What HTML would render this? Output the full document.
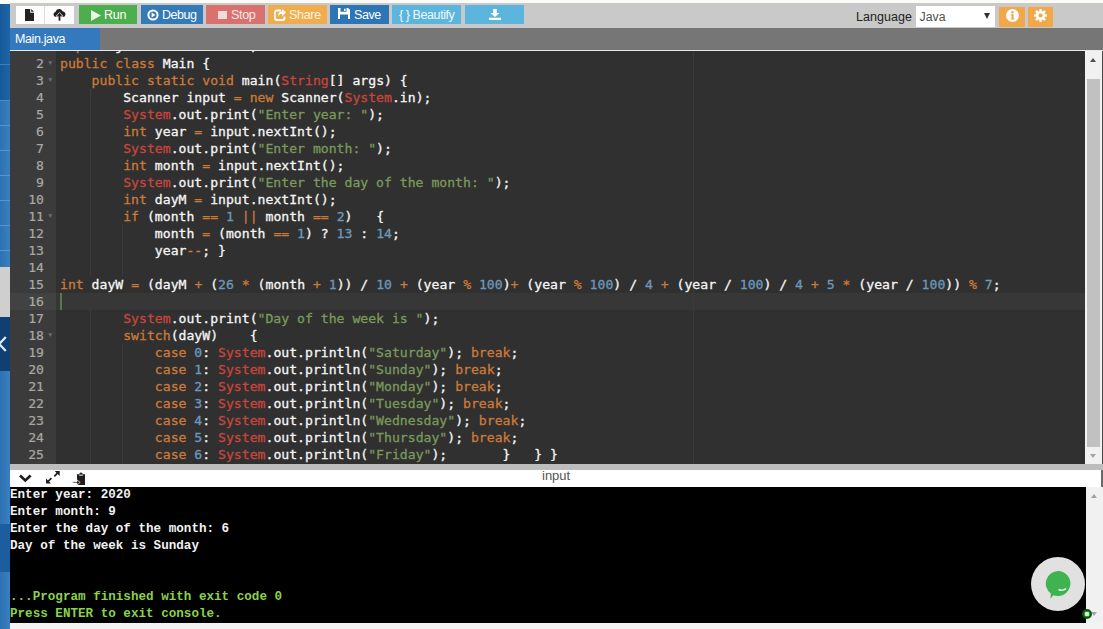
<!DOCTYPE html>
<html>
<head>
<meta charset="utf-8">
<title>Online Java Compiler</title>
<style>
*{box-sizing:border-box;margin:0;padding:0}
html,body{width:1103px;height:629px;overflow:hidden;background:#f4f4f4;font-family:"Liberation Sans",sans-serif}
.abs{position:absolute}
#top{left:0;top:0;width:1103px;height:4px;background:#fbfbf8}
#side{left:0;top:3px;width:10px;height:626px;background:linear-gradient(to right,#2c71b2,#3a7fc0);overflow:hidden}
#side div{position:absolute;left:0;width:10px}
#toolbar{left:10px;top:3px;width:1093px;height:25px;background:#c9c9c9}
.btn{position:absolute;top:2px;height:19px;color:#fff;font-size:12.5px;line-height:19px;white-space:nowrap;letter-spacing:-0.3px}
.btn svg{position:absolute}
.btn span{position:absolute;top:1px}
#tabbar{left:10px;top:28px;width:1093px;height:22px;background:#767676}
#tab{left:0;top:0;width:90px;height:22px;background:#3478bd;color:#fff;font-size:12.5px;line-height:23px;padding-left:5px;letter-spacing:-0.38px}
#edline{left:10px;top:50px;width:1093px;height:1px;background:#e8e8e8}
#editor{left:10px;top:51px;width:1075px;height:413px;background:#303030;overflow:hidden}
#gutter{left:0;top:0;width:46px;height:413px;background:#3b3b3b}
#active{left:0;top:242.400px;width:1075px;height:17px;background:#373737}
#gactive{left:0;top:242.400px;width:46px;height:17px;background:#424242}
.ln{position:absolute;left:0;width:34px;text-align:right;color:#a8a8a4;height:17px;-webkit-text-stroke:0.200px}
.fold{position:absolute;left:37px;width:7px;height:17px;color:#6e6e6e;font-size:6.500px;line-height:16px}
.mono{font-family:"DejaVu Sans Mono","Liberation Mono",monospace;font-size:13.14px;line-height:17px;white-space:pre}
.cl{position:absolute;left:50px;height:17px;color:#f6f6f6;-webkit-text-stroke:0.3px}
.k{color:#cc7a38}.s{color:#7a9a5a}.c{color:#c9453c}.n{color:#6c98bd}.o{color:#cc7a38}
.guide{position:absolute;width:1px;background:#3c3c3c}
#pm{left:683px;top:0;width:1px;height:413px;background:#3b3b3b}
#vsb{left:1085px;top:51px;width:17px;height:413px;background:#f1f1f1}
#vsb .thumb{position:absolute;left:2px;top:28px;width:13px;height:368px;background:#c1c1c1}
#rline{left:1101.500px;top:51px;width:1.500px;height:413px;background:#4a4a4a}
#split{left:10px;top:464px;width:1093px;height:6px;background:#bdbdbd}
#chead{left:10px;top:470px;width:1093px;height:17px;background:#fff}
#chead .lbl{position:absolute;left:532px;top:-1px;font-size:13px;line-height:14px;color:#555}
#console{left:10px;top:487px;width:1076px;height:136px;background:#000;overflow:hidden}
.con{font-family:"Liberation Mono",monospace;font-weight:bold;font-size:12.6px;line-height:17px;white-space:pre;position:absolute;left:0;color:#f2f2f2}
.g{color:#8ad24a}
#csb{left:1086px;top:487px;width:17px;height:136px;background:#f1f1f1}
#bottom{left:10px;top:623px;width:1093px;height:6px;background:#f3f3f3}
.tri{position:absolute;width:0;height:0;border-left:3.500px solid transparent;border-right:3.500px solid transparent}
</style>
</head>
<body>
<div class="abs" id="top"></div>

<div class="abs" id="side">
  <div style="top:0;height:97px;background:linear-gradient(to right,#15599a,#1e65a7)"></div>
  <div style="top:60.500px;height:1px;background:#3f7cba"></div>
  <div style="top:96.500px;height:1px;background:#4f8ac6"></div>
  <div style="top:121.5px;height:1px;background:#5b92c9"></div>
  <div style="top:146.5px;height:1px;background:#5b92c9"></div>
  <div style="top:171.5px;height:1px;background:#5b92c9"></div>
  <div style="top:196.5px;height:1px;background:#5b92c9"></div>
  <div style="top:221.5px;height:1px;background:#5b92c9"></div>
  <div style="top:246.5px;height:1px;background:#5b92c9"></div>
  <div style="top:264px;height:50px;background:#cfcfcf"></div>
  <div style="top:314px;height:54px;background:#0f3f73"></div>
  <svg style="position:absolute;left:0;top:330px" width="10" height="22" viewBox="0 0 10 22"><path d="M5.800 4 L-0.800 11 L5.800 18" fill="none" stroke="#dbeaf8" stroke-width="2.300"/></svg>
  <div style="top:520.500px;height:48px;background:#1c5d9f"></div>
</div>

<div class="abs" style="left:0;top:0;width:10px;height:4px;background:#fbfbf8"></div>

<div class="abs" id="toolbar">
  <div class="btn" style="left:6px;width:28px;background:#fdfdfd;top:3px;height:18px"><svg style="left:8.800px;top:2.500px" width="9" height="12" viewBox="0 0 9 12"><path d="M0 0 H5.200 V3.800 H9 V12 H0 Z M6.200 0 L9 2.800 H6.200 Z" fill="#222"/></svg></div>
  <div class="btn" style="left:34px;width:30px;background:#fdfdfd;border-left:1px solid #ddd;top:3px;height:18px"><svg style="left:8px;top:3px" width="13" height="12" viewBox="0 0 13 12"><path d="M2.800 8 A2.700 2.700 0 0 1 2.600 2.700 A3.700 3.700 0 0 1 9.600 2.300 A2.900 2.900 0 0 1 10.300 8 Z" fill="#222"/><path d="M6.500 3.400 L10 7.300 H7.800 V12 H5.200 V7.300 H3 Z" fill="#222" stroke="#fdfdfd" stroke-width="0.700"/></svg></div>
  <div class="btn" style="left:69px;width:58px;background:#4cae4c"><svg style="left:12px;top:4.500px" width="10" height="11" viewBox="0 0 10 11"><path d="M0 0 L10 5.500 L0 11 Z" fill="#e9f8e4"/></svg><span style="left:25px">Run</span></div>
  <div class="btn" style="left:131px;width:62px;background:#337ab7"><svg style="left:6px;top:4px" width="12" height="12" viewBox="0 0 12 12"><circle cx="6" cy="6" r="4.600" fill="none" stroke="#fff" stroke-width="2"/><path d="M4.6 3.6 L8.4 6 L4.6 8.4 Z" fill="#fff"/></svg><span style="left:21px;letter-spacing:-0.450px">Debug</span></div>
  <div class="btn" style="left:196px;width:59px;background:#d9726f"><svg style="left:11.500px;top:6px" width="9" height="8" viewBox="0 0 9 8"><rect width="9" height="8" fill="#f3dada"/></svg><span style="left:25px;color:#fbe9e9">Stop</span></div>
  <div class="btn" style="left:258px;width:59px;background:#f0ad4e"><svg style="left:6px;top:4px" width="12" height="12" viewBox="0 0 12 12"><path d="M7 1.5 H3 A2 2 0 0 0 1 3.500 V9 A2 2 0 0 0 3 11 H8.500 A2 2 0 0 0 10.500 9 V7.500" fill="none" stroke="#fff" stroke-width="1.8"/><path d="M12 3.600 L8.200 0 V2.200 C5.500 2.200 4 4 4 7.500 C5 5.500 6.200 5 8.200 5 V7.200 Z" fill="#fff"/></svg><span style="left:21px;color:#fdf3e2">Share</span></div>
  <div class="btn" style="left:320px;width:59px;background:#2e75b6"><svg style="left:8px;top:3px" width="12" height="11" viewBox="0 0 12 12" preserveAspectRatio="none"><path d="M0 0 H10 L12 2 V12 H0 Z M2.500 0 V4 H8.500 V0 Z M6 0.800 H7.600 V3.200 H6 Z M2 7 V12 H10 V7 Z" fill="#fff" fill-rule="evenodd"/></svg><span style="left:24px;letter-spacing:-0.450px">Save</span></div>
  <div class="btn" style="left:382px;width:69px;background:#5bb5dd"><span style="left:7px;color:#f0f9fd;letter-spacing:-0.420px">{ } Beautify</span></div>
  <div class="btn" style="left:455px;width:59px;background:#5bb5dd"><svg style="left:23.500px;top:3.500px" width="12" height="11.500" viewBox="0 0 13 13" preserveAspectRatio="none"><path d="M4.500 0 H8.500 V4.500 H11.500 L6.500 9 L1.500 4.500 H4.500 Z M0 10 H13 V13 H0 Z" fill="#fff"/></svg></div>

  <div class="abs" style="left:846px;top:6px;font-size:12.5px;line-height:16px;color:#222;letter-spacing:0.05px">Language</div>
  <div class="abs" style="left:906px;top:3px;width:79px;height:21.400px;background:#fff;font-size:12.300px;line-height:22px;color:#505050;padding-left:3.500px">Java<div class="tri" style="left:68px;top:7px;border-left-width:3.5px;border-right-width:3.500px;border-top:6px solid #333"></div></div>
  <div class="abs" style="left:989px;top:4px;width:26px;height:20.400px;background:#f0a848"><svg style="position:absolute;left:6.700px;top:2px" width="13" height="13" viewBox="0 0 13 13"><circle cx="6.500" cy="6.500" r="6.500" fill="#fff"/><rect x="5.600" y="5.300" width="2" height="4.600" fill="#f0a848"/><rect x="4.800" y="9.300" width="3.600" height="1.200" fill="#f0a848"/><rect x="4.800" y="5.300" width="2" height="1.200" fill="#f0a848"/><circle cx="6.500" cy="3.300" r="1.200" fill="#f0a848"/></svg></div>
  <div class="abs" style="left:1018px;top:4px;width:25px;height:20.400px;background:#f0a848"><svg style="position:absolute;left:6.300px;top:2px" width="13" height="13" viewBox="0 0 13 13"><g fill="#fff"><circle cx="6.500" cy="6.500" r="4.600"/><rect x="5.300" y="0" width="2.400" height="13"/><rect x="0" y="5.300" width="13" height="2.400"/><rect x="5.300" y="0" width="2.400" height="13" transform="rotate(45 6.500 6.500)"/><rect x="5.300" y="0" width="2.400" height="13" transform="rotate(-45 6.500 6.500)"/></g><circle cx="6.500" cy="6.500" r="2.100" fill="#f0a848"/></svg></div>
</div>

<div class="abs" id="tabbar"><div class="abs" id="tab">Main.java</div></div>
<div class="abs" id="edline"></div>

<div class="abs" id="editor">
  <div class="abs" id="active"></div>
  <div class="abs" id="gutter"></div>
  <div class="abs" id="gactive"></div>
  <div class="abs" id="pm"></div>
  <div class="abs" style="left:50px;top:242px;width:2px;height:17px;background:#4f7d45"></div>
  <div id="guides">
  <div class="guide" style="left:80.4px;top:38px;height:187px"></div>
  <div class="guide" style="left:80.4px;top:259px;height:153px"></div>
  <div class="guide" style="left:112.0px;top:174px;height:51px"></div>
  <div class="guide" style="left:112.0px;top:293px;height:119px"></div>
  </div><!--/g-->
  <div id="lines">
  <div class="ln mono" style="top:-13.7px">1</div>
  <div class="cl mono" style="top:-13.7px"><span class="k">import</span> java.util.Scanner;</div>
  <div class="ln mono" style="top:4px">2</div>
  <div class="fold" style="top:4px">&#9660;</div>
  <div class="cl mono" style="top:4px"><span class="k">public</span> <span class="k">class</span> Main {</div>
  <div class="ln mono" style="top:21px">3</div>
  <div class="fold" style="top:21px">&#9660;</div>
  <div class="cl mono" style="top:21px">    <span class="k">public</span> <span class="k">static</span> <span class="k">void</span> main(<span class="c">String</span>[] args) {</div>
  <div class="ln mono" style="top:38px">4</div>
  <div class="cl mono" style="top:38px">        Scanner input <span class="o">=</span> <span class="k">new</span> Scanner(<span class="c">System</span>.in);</div>
  <div class="ln mono" style="top:55px">5</div>
  <div class="cl mono" style="top:55px">        <span class="c">System</span>.out.print(<span class="s">"Enter year: "</span>);</div>
  <div class="ln mono" style="top:72px">6</div>
  <div class="cl mono" style="top:72px">        <span class="k">int</span> year <span class="o">=</span> input.nextInt();</div>
  <div class="ln mono" style="top:89px">7</div>
  <div class="cl mono" style="top:89px">        <span class="c">System</span>.out.print(<span class="s">"Enter month: "</span>);</div>
  <div class="ln mono" style="top:106px">8</div>
  <div class="cl mono" style="top:106px">        <span class="k">int</span> month <span class="o">=</span> input.nextInt();</div>
  <div class="ln mono" style="top:123px">9</div>
  <div class="cl mono" style="top:123px">        <span class="c">System</span>.out.print(<span class="s">"Enter the day of the month: "</span>);</div>
  <div class="ln mono" style="top:140px">10</div>
  <div class="cl mono" style="top:140px">        <span class="k">int</span> dayM <span class="o">=</span> input.nextInt();</div>
  <div class="ln mono" style="top:157px">11</div>
  <div class="fold" style="top:157px">&#9660;</div>
  <div class="cl mono" style="top:157px">        <span class="k">if</span> (month <span class="o">==</span> <span class="n">1</span> <span class="o">||</span> month <span class="o">==</span> <span class="n">2</span>)   {</div>
  <div class="ln mono" style="top:174px">12</div>
  <div class="cl mono" style="top:174px">            month <span class="o">=</span> (month <span class="o">==</span> <span class="n">1</span>) ? <span class="n">13</span> : <span class="n">14</span>;</div>
  <div class="ln mono" style="top:191px">13</div>
  <div class="cl mono" style="top:191px">            year<span class="o">--</span>; }</div>
  <div class="ln mono" style="top:208px">14</div>
  <div class="ln mono" style="top:225px">15</div>
  <div class="cl mono" style="top:225px"><span class="k">int</span> dayW <span class="o">=</span> (dayM <span class="o">+</span> (<span class="n">26</span> <span class="o">*</span> (month <span class="o">+</span> <span class="n">1</span>)) / <span class="n">10</span> <span class="o">+</span> (year <span class="o">%</span> <span class="n">100</span>)<span class="o">+</span> (year <span class="o">%</span> <span class="n">100</span>) / <span class="n">4</span> <span class="o">+</span> (year / <span class="n">100</span>) / <span class="n">4</span> <span class="o">+</span> <span class="n">5</span> <span class="o">*</span> (year / <span class="n">100</span>)) <span class="o">%</span> <span class="n">7</span>;</div>
  <div class="ln mono" style="top:242px">16</div>
  <div class="ln mono" style="top:259px">17</div>
  <div class="cl mono" style="top:259px">        <span class="c">System</span>.out.print(<span class="s">"Day of the week is "</span>);</div>
  <div class="ln mono" style="top:276px">18</div>
  <div class="fold" style="top:276px">&#9660;</div>
  <div class="cl mono" style="top:276px">        <span class="k">switch</span>(dayW)    {</div>
  <div class="ln mono" style="top:293px">19</div>
  <div class="cl mono" style="top:293px">            <span class="k">case</span> <span class="n">0</span>: <span class="c">System</span>.out.println(<span class="s">"Saturday"</span>); <span class="k">break</span>;</div>
  <div class="ln mono" style="top:310px">20</div>
  <div class="cl mono" style="top:310px">            <span class="k">case</span> <span class="n">1</span>: <span class="c">System</span>.out.println(<span class="s">"Sunday"</span>); <span class="k">break</span>;</div>
  <div class="ln mono" style="top:327px">21</div>
  <div class="cl mono" style="top:327px">            <span class="k">case</span> <span class="n">2</span>: <span class="c">System</span>.out.println(<span class="s">"Monday"</span>); <span class="k">break</span>;</div>
  <div class="ln mono" style="top:344px">22</div>
  <div class="cl mono" style="top:344px">            <span class="k">case</span> <span class="n">3</span>: <span class="c">System</span>.out.println(<span class="s">"Tuesday"</span>); <span class="k">break</span>;</div>
  <div class="ln mono" style="top:361px">23</div>
  <div class="cl mono" style="top:361px">            <span class="k">case</span> <span class="n">4</span>: <span class="c">System</span>.out.println(<span class="s">"Wednesday"</span>); <span class="k">break</span>;</div>
  <div class="ln mono" style="top:378px">24</div>
  <div class="cl mono" style="top:378px">            <span class="k">case</span> <span class="n">5</span>: <span class="c">System</span>.out.println(<span class="s">"Thursday"</span>); <span class="k">break</span>;</div>
  <div class="ln mono" style="top:395px">25</div>
  <div class="cl mono" style="top:395px">            <span class="k">case</span> <span class="n">6</span>: <span class="c">System</span>.out.println(<span class="s">"Friday"</span>);       }   } }</div>
  </div><!--/l-->
</div>

<div class="abs" id="vsb">
  <div class="tri" style="left:5px;top:6.500px;border-bottom:4px solid #505050"></div>
  <div class="thumb"></div>
  <div class="tri" style="left:5px;top:402.500px;border-top:4px solid #a3a3a3"></div>
</div>
<div class="abs" id="rline"></div>

<div class="abs" id="split"></div>
<div class="abs" id="chead">
  <svg style="position:absolute;left:8px;top:3px" width="15" height="10" viewBox="0 0 15 10"><path d="M2 2.400 L7.300 7.400 L12.600 2.400" fill="none" stroke="#1e1e1e" stroke-width="2.700"/></svg>
  <svg style="position:absolute;left:35px;top:0" width="16" height="15" viewBox="0 0 16 15"><path d="M9.700 1 H14.700 V6 Z M1 8.600 V13.600 H6 Z" fill="#1e1e1e"/><path d="M13 2.700 L9.300 6.400 M2.700 11.900 L6.400 8.200" stroke="#1e1e1e" stroke-width="1.700"/></svg>
  <svg style="position:absolute;left:62px;top:2px" width="14" height="14" viewBox="0 0 14 14"><path d="M5 2.300 H7.300 A1.700 1.700 0 0 1 10.700 2.300 H13 V13 H5 Z" fill="#1e1e1e"/><rect x="7.200" y="2.600" width="3.600" height="1.100" fill="#eee"/><path d="M0.800 9.700 H5 V7.900 L8.200 10.400 L5 12.900 V11.100 H0.800 Z" fill="#1e1e1e" stroke="#fff" stroke-width="0.700"/></svg>
  <div class="lbl">input</div>
  <div class="abs" style="left:1091px;top:0;width:2px;height:17px;background:#6a6a6a"></div>
</div>

<div class="abs" id="console">
  <div class="con" style="top:0px">Enter year: 2020</div>
  <div class="con" style="top:17px">Enter month: 9</div>
  <div class="con" style="top:34px">Enter the day of the month: 6</div>
  <div class="con" style="top:51px">Day of the week is Sunday</div>
  <div class="con g" style="top:102px">...Program finished with exit code 0</div>
  <div class="con g" style="top:119px">Press ENTER to exit console.</div>
</div>
<div class="abs" id="csb">
  <div class="tri" style="left:5px;top:7px;border-bottom:4px solid #a3a3a3"></div>
  <div class="tri" style="left:5px;top:125px;border-top:4px solid #a3a3a3"></div>
</div>
<div class="abs" id="bottom"></div>

<div class="abs" style="left:1031px;top:557px;width:54px;height:54px;border-radius:50%;background:#e1e1e1">
  <svg style="position:absolute;left:13px;top:13px" width="28" height="29" viewBox="0 0 28 29"><path d="M14 1 A12.500 12.500 0 1 1 9.500 25.200 L6.500 28.500 L6.800 23.500 A12.500 12.500 0 0 1 14 1 Z" fill="#3fb34f"/><path d="M14.500 19.500 Q18.500 21.500 22 18.500" fill="none" stroke="#e8f6e8" stroke-width="1.600"/></svg>
</div>
<div class="abs" style="left:1081.500px;top:609px;width:10px;height:10px;border-radius:50%;background:#2f9e3a;border:2px solid #0a5a12"><div class="abs" style="left:1.500px;top:1px;width:4px;height:4px;border-radius:1px;background:#d5f5d5"></div></div>

</body>
</html>
